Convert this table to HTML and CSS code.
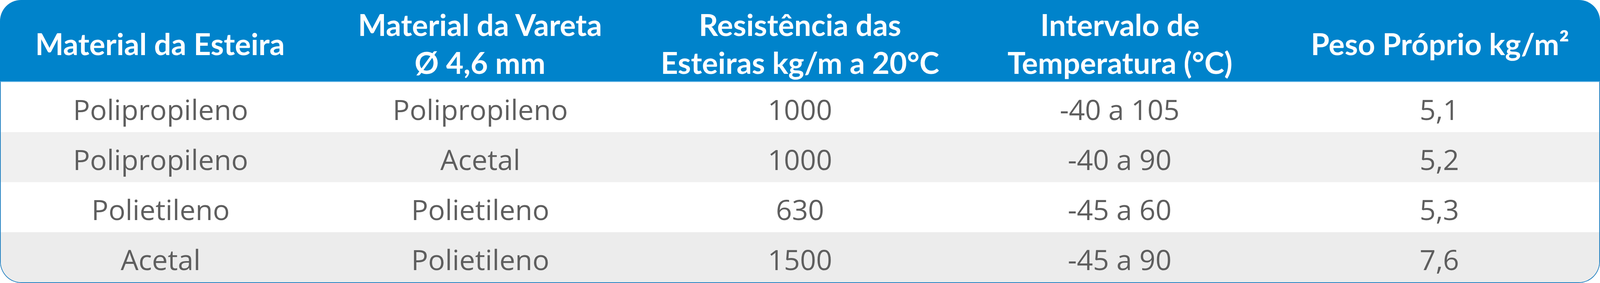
FILE: index.html
```html
<!DOCTYPE html>
<html lang="pt">
<head>
<meta charset="utf-8">
<title>Tabela de materiais</title>
<link rel="stylesheet" href="styles.css">
</head>
<body>
<div class="table">
  <div class="head">
    <div class="hcell">Material da Esteira</div>
    <div class="hcell">Material da Vareta<br>Ø 4,6 mm</div>
    <div class="hcell">Resistência das<br>Esteiras kg/m a 20°C</div>
    <div class="hcell">Intervalo de<br>Temperatura (°C)</div>
    <div class="hcell">Peso Próprio kg/m²</div>
  </div>
  <div class="body">
    <div class="row">
      <div class="cell">Polipropileno</div>
      <div class="cell">Polipropileno</div>
      <div class="cell">1000</div>
      <div class="cell">-40 a 105</div>
      <div class="cell">5,1</div>
    </div>
    <div class="row alt">
      <div class="cell">Polipropileno</div>
      <div class="cell">Acetal</div>
      <div class="cell">1000</div>
      <div class="cell">-40 a 90</div>
      <div class="cell">5,2</div>
    </div>
    <div class="row">
      <div class="cell">Polietileno</div>
      <div class="cell">Polietileno</div>
      <div class="cell">630</div>
      <div class="cell">-45 a 60</div>
      <div class="cell">5,3</div>
    </div>
    <div class="row alt2">
      <div class="cell">Acetal</div>
      <div class="cell">Polietileno</div>
      <div class="cell">1500</div>
      <div class="cell">-45 a 90</div>
      <div class="cell">7,6</div>
    </div>
  </div>
</div>
</body>
</html>
```

FILE: styles.css
```css
html, body {
  margin: 0;
  padding: 0;
  background: #ffffff;
}

.table {
  width: 100%;
  height: 724px;
  display: flex;
  flex-direction: column;
}

.head {
  height: 208px;
  flex: none;
  background: #0083cb;
  border-radius: 54px 54px 0 0;
  display: grid;
  grid-template-columns: repeat(5, minmax(0, 1fr));
}

.hcell {
  display: flex;
  align-items: center;
  justify-content: center;
  text-align: center;
  padding-top: 14px;
  box-sizing: border-box;
  color: #ffffff;
  font-family: Lato, "Open Sans", sans-serif;
  font-weight: 700;
  font-size: 1.875vw;
  line-height: 97px;
  white-space: nowrap;
}

.body {
  flex: 1;
  border: 2px solid #2683c2;
  border-top-color: #7fc1ea;
  border-radius: 0 0 55px 55px;
  overflow: hidden;
  display: flex;
  flex-direction: column;
}

.row {
  height: 128px;
  flex: none;
  display: grid;
  grid-template-columns: repeat(5, minmax(0, 1fr));
  background: #ffffff;
}

.row.alt {
  background: #f0f0f0;
}

.row.alt2 {
  background: #ececec;
  flex: 1;
}

.cell {
  display: flex;
  align-items: center;
  justify-content: center;
  padding-top: 10px;
  box-sizing: border-box;
  color: #5e5e5e;
  font-family: "Open Sans", sans-serif;
  font-size: 1.76vw;
  line-height: 1;
  white-space: nowrap;
}
```
